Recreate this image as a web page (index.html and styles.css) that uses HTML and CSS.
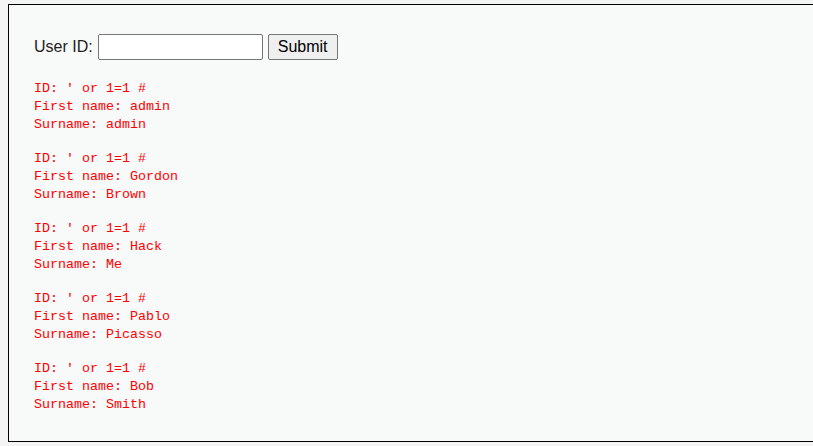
FILE: index.html
```html
<!DOCTYPE html>
<html>
<head>
<meta charset="utf-8">
<link rel="stylesheet" href="styles.css">
</head>
<body>
<div class="vulnerable_code_area">
  <form class="uid-form">
    <label class="uid-label">User ID:</label>
    <input class="uid-input" type="text">
    <button class="uid-submit" type="button">Submit</button>
  </form>
  <pre class="result">ID: ' or 1=1 #
First name: admin
Surname: admin</pre>
  <pre class="result">ID: ' or 1=1 #
First name: Gordon
Surname: Brown</pre>
  <pre class="result">ID: ' or 1=1 #
First name: Hack
Surname: Me</pre>
  <pre class="result">ID: ' or 1=1 #
First name: Pablo
Surname: Picasso</pre>
  <pre class="result">ID: ' or 1=1 #
First name: Bob
Surname: Smith</pre>
</div>
</body>
</html>
```
FILE: styles.css
```css
html, body {
  margin: 0;
  padding: 0;
  background: #f4f4f4;
  overflow: hidden;
}
.vulnerable_code_area {
  margin: 4px 0 0 8px;
  height: 436px;
  box-sizing: content-box;
  border: 1px solid #000;
  border-right: 0;
  background: #f8f9f9;
  padding: 0 0 0 25px;
}
.uid-form {
  display: flex;
  align-items: center;
  padding-top: 29px;
  height: 26px;
  margin: 0;
  font-family: "Liberation Sans", Arial, sans-serif;
  font-size: 16px;
  color: #222;
}
.uid-label {
  margin-right: 5px;
}
.uid-input {
  width: 165px;
  height: 26px;
  box-sizing: border-box;
  border: 1px solid #767676;
  border-radius: 2px;
  background: #fff;
  margin: 0 5px 0 0;
}
.uid-submit {
  height: 26px;
  width: 70px;
  box-sizing: border-box;
  border: 1px solid #767676;
  border-radius: 2px;
  background: #efefef;
  font-family: "Liberation Sans", Arial, sans-serif;
  font-size: 16px;
  color: #000;
  padding: 0;
}
.result {
  margin: 20px 0 0 0;
  font-family: "Liberation Mono", "Courier New", monospace;
  font-size: 13.33px;
  line-height: 18px;
  color: #f00;
}
.result + .result {
  margin-top: 16px;
}
```
